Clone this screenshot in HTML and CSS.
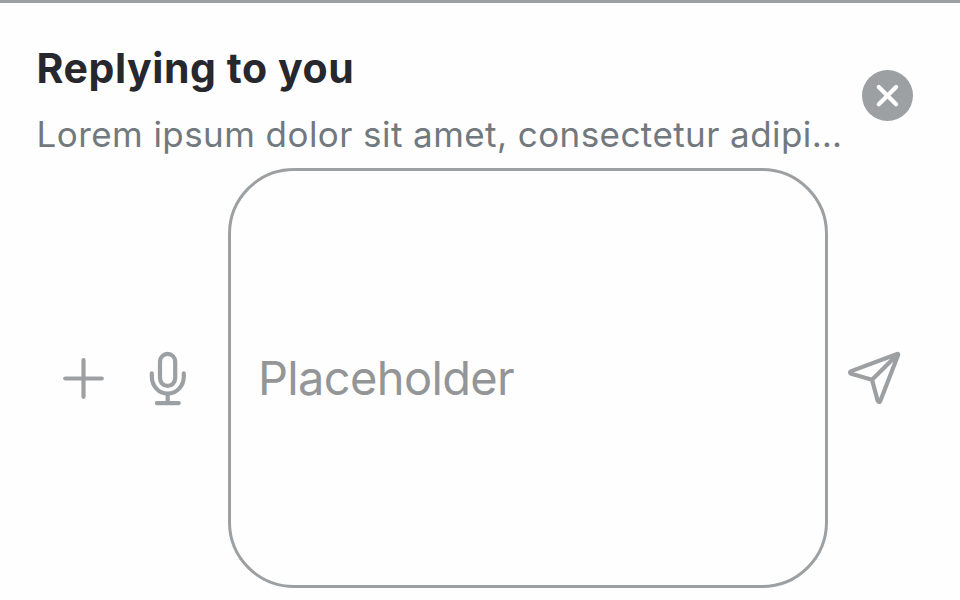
FILE: index.html
```html
<!DOCTYPE html>
<html lang="en">
<head>
<meta charset="utf-8">
<title>Reply composer</title>
<link rel="stylesheet" href="styles.css">
</head>
<body>
<main class="composer">
  <header class="reply">
    <div class="reply-text">
      <div class="reply-title"><span>Replying to you</span></div>
      <div class="reply-preview"><span>Lorem ipsum dolor sit amet, consectetur adipi…</span></div>
    </div>
    <button class="close" aria-label="Cancel reply">
      <svg width="51" height="51" viewBox="0 0 51 51"><circle cx="25.5" cy="25.5" r="25.5" fill="#9da0a3"/><path d="M16.8 17 34.1 34.2M34.1 17 16.8 34.2" stroke="#fff" stroke-width="4.2" stroke-linecap="round"/></svg>
    </button>
  </header>
  <section class="input-row">
    <button class="plus" aria-label="Add attachment">
      <svg width="42" height="42" viewBox="0 0 42 42"><path d="M21.5 3.2V39.8M3.2 21.5H39.8" class="line"/></svg>
    </button>
    <button class="mic" aria-label="Record audio">
      <svg width="38" height="56" viewBox="0 0 38 56"><rect x="11" y="3.9" width="15.2" height="32" rx="7.6" class="line"/><path d="M2.8 23.4V26.5C2.8 36 9.8 43.7 18.7 43.7S34.8 36 34.8 26.5V23.4M18.7 43.7V53M7.9 53.1H29.8" class="line"/></svg>
    </button>
    <div class="field"><span>Placeholder</span></div>
    <button class="send" aria-label="Send">
      <svg width="54" height="54" viewBox="0 0 54 54"><path d="M49.2 3 3.2 20.1Q.8 21.6 3.2 22.8L24 28.7 29.6 49.5Q31.1 52.5 32.5 49.5L50 4.2Q50.5 2.6 49.2 3ZM24 28.7 49.5 3.4" class="line"/></svg>
    </button>
  </section>
</main>
</body>
</html>
```
FILE: styles.css
```css
* {
  box-sizing: border-box;
}

body {
  margin: 0;
  background: #fefefe;
  font-family: Inter, "Liberation Sans", sans-serif;
}

button {
  padding: 0;
  border: 0;
  background: none;
}

svg {
  display: block;
}

.composer {
  height: 600px;
  border-top: 3px solid #9da0a3;
  overflow: hidden;
}

.reply {
  display: flex;
  height: 165px;
  padding: 40px 47px 0 36.6px;
  justify-content: space-between;
}

.reply-text {
  white-space: nowrap;
}

.reply-title {
  height: 50px;
  line-height: 50px;
  font-size: 41px;
  font-weight: 700;
  letter-spacing: 0.56px;
  color: #27272e;
}

.reply-preview {
  margin-top: 16px;
  height: 50px;
  line-height: 50px;
  font-size: 35px;
  letter-spacing: 0.43px;
  color: #72797e;
}

.close {
  width: 51px;
  height: 51px;
  margin-top: 27px;
}

.input-row {
  display: flex;
  height: 420px;
  padding-left: 62px;
  align-items: center;
}

.mic {
  margin-left: 45px;
}

.field {
  display: flex;
  align-items: center;
  width: 600px;
  height: 420px;
  margin-left: 41px;
  padding: 0 0 2px 27px;
  border: 3px solid #9da0a3;
  border-radius: 66px;
  font-size: 47px;
  letter-spacing: -0.65px;
  color: #939597;
}

.send {
  margin-left: 20px;
}

.line {
  fill: none;
  stroke: #9da0a3;
  stroke-width: 4.2;
  stroke-linecap: round;
  stroke-linejoin: round;
}
```
